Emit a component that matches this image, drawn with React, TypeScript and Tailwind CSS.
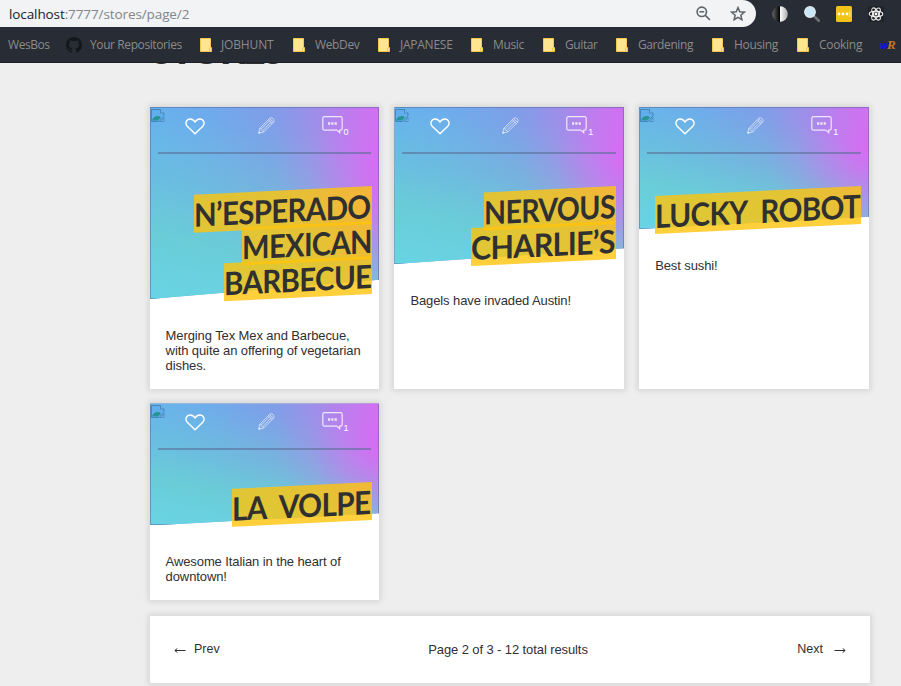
import React from "react";

type Line = { text: string; width: string; fit: string };
type Store = { lines: Line[]; reviews: number; description: string };

const stores: Store[] = [
  {
    lines: [
      { text: "N’ESPERADO", width: "w-[178px]", fit: "scale-x-[0.92]" },
      { text: "MEXICAN", width: "w-[130px]", fit: "scale-x-[0.91]" },
      { text: "BARBECUE", width: "w-[148px]", fit: "scale-x-[0.92]" },
    ],
    reviews: 0,
    description: "Merging Tex Mex and Barbecue, with quite an offering of vegetarian dishes.",
  },
  {
    lines: [
      { text: "NERVOUS", width: "w-[132px]", fit: "scale-x-[0.893]" },
      { text: "CHARLIE’S", width: "w-[145px]", fit: "scale-x-[0.95]" },
    ],
    reviews: 1,
    description: "Bagels have invaded Austin!",
  },
  {
    lines: [{ text: "LUCKY ROBOT", width: "w-[206px]", fit: "scale-x-[0.925] [word-spacing:8px]" }],
    reviews: 1,
    description: "Best sushi!",
  },
  {
    lines: [{ text: "LA VOLPE", width: "w-[140px]", fit: "scale-x-[0.93] [word-spacing:8px]" }],
    reviews: 1,
    description: "Awesome Italian in the heart of downtown!",
  },
];

const bookmarks = [
  { label: "JOBHUNT", width: "w-[93px]", gap: "gap-[9px] tracking-[-0.15px]" },
  { label: "WebDev", width: "w-[85px]", gap: "gap-[10px] tracking-[-0.35px]" },
  { label: "JAPANESE", width: "w-[93px]", gap: "gap-[10px] tracking-[-0.25px]" },
  { label: "Music", width: "w-[72px]", gap: "gap-[10px] tracking-[-0.35px]" },
  { label: "Guitar", width: "w-[73px]", gap: "gap-[10px] tracking-[-0.4px]" },
  { label: "Gardening", width: "w-[96px]", gap: "gap-[10px] tracking-[-0.4px]" },
  { label: "Housing", width: "w-[85px]", gap: "gap-[10px] tracking-[-0.3px]" },
  { label: "Cooking", width: "w-[83px]", gap: "gap-[10px] tracking-[-0.3px]" },
];

function Folder() {
  return (
    <svg className="h-[14px] w-[12px] shrink-0" viewBox="0 0 12 14">
      <path d="M.5.5h10v9h1v4H.5z" fill="#ffe58f" stroke="#f2c94c" />
      <path d="M9.5 13V10" stroke="#f2c94c" />
    </svg>
  );
}

function GitHub() {
  return (
    <svg className="h-4 w-4 shrink-0" viewBox="0 0 16 16" fill="#14171a">
      <path d="M8 0C3.58 0 0 3.58 0 8c0 3.54 2.29 6.53 5.47 7.59.4.07.55-.17.55-.38 0-.19-.01-.82-.01-1.49-2.01.37-2.53-.49-2.69-.94-.09-.23-.48-.94-.82-1.13-.28-.15-.68-.52-.01-.53.63-.01 1.08.58 1.23.82.72 1.21 1.87.87 2.33.66.07-.52.28-.87.51-1.07-1.78-.2-3.64-.89-3.64-3.95 0-.87.31-1.59.82-2.15-.08-.2-.36-1.02.08-2.12 0 0 .67-.21 2.2.82a7.6 7.6 0 014 0c1.53-1.04 2.2-.82 2.2-.82.44 1.1.16 1.92.08 2.12.51.56.82 1.27.82 2.15 0 3.07-1.87 3.75-3.65 3.95.29.25.54.73.54 1.48 0 1.07-.01 1.93-.01 2.2 0 .21.15.46.55.38A8.01 8.01 0 0016 8c0-4.42-3.58-8-8-8z" />
    </svg>
  );
}

function BrowserBar() {
  return (
    <header className="h-[63px] border-b border-[#1b1e24] bg-[#282c34]">
      <div className="flex h-[27px]">
        <div className="flex h-[27px] w-[756px] items-center rounded-br-[14px] rounded-tr-[14px] bg-[#f1f3f4] pl-[9px] pr-[10px]">
          <span className="flex-1 whitespace-nowrap text-[13.5px] leading-[18px] tracking-[-0.1px] text-[#80868b]">
            <span className="text-[#202124]">localhost</span>:7777/stores/page/2
          </span>
          <svg className="mr-[19px] h-[15px] w-[15px]" viewBox="0 0 15 15" fill="none" stroke="#5f6368" strokeWidth="1.6">
            <circle cx="5.8" cy="5.8" r="4.7" />
            <path d="M3.4 5.8h4.8M9.2 9.2l4.7 4.7" />
          </svg>
          <svg className="h-4 w-4" viewBox="0 0 16 16" fill="none" stroke="#5f6368" strokeWidth="1.5">
            <path d="M8 1.6l1.75 4.2 4.55.4-3.45 3 1.03 4.45L8 11.3l-3.88 2.35L5.15 9.2 1.7 6.2l4.55-.4z" />
          </svg>
        </div>
        <div className="flex items-center gap-4 pl-4">
          <svg className="h-4 w-4" viewBox="0 0 16 16">
            <defs>
              <linearGradient id="contrastLeft">
                <stop offset="0" stopColor="#666" />
                <stop offset="1" stopColor="#000" />
              </linearGradient>
              <linearGradient id="contrastRight">
                <stop offset="0" stopColor="#fff" />
                <stop offset="1" stopColor="#aaa" />
              </linearGradient>
            </defs>
            <path d="M8 .2a7.8 7.8 0 000 15.600z" fill="url(#contrastLeft)" />
            <path d="M8 .2a7.8 7.8 0 010 15.600z" fill="url(#contrastRight)" />
          </svg>
          <svg className="h-4 w-4" viewBox="0 0 16 16">
            <path d="M9.5 9.5l5.300 5.200" stroke="#6a7076" strokeWidth="2.600" strokeLinecap="round" />
            <circle cx="6" cy="6" r="5.300" fill="#c8e8f8" stroke="#e5edf2" strokeWidth="1.200" />
          </svg>
          <svg className="h-4 w-4" viewBox="0 0 16 16">
            <rect width="16" height="16" rx="1.5" fill="#f0c419" />
            <g fill="#fff">
              <circle cx="3" cy="8" r="1.4" />
              <circle cx="7" cy="8" r="1.4" />
              <circle cx="11" cy="8" r="1.4" />
              <path d="M13.5 5h.8v6h-.8z" fillOpacity=".7" />
            </g>
          </svg>
          <svg className="h-4 w-4" viewBox="0 0 16 16">
            <rect width="16" height="16" fill="#202329" />
            <g fill="none" stroke="#f5f5f5" strokeWidth="1.1">
              <ellipse cx="8" cy="8" rx="6.8" ry="2.7" />
              <ellipse cx="8" cy="8" rx="6.8" ry="2.7" transform="rotate(60 8 8)" />
              <ellipse cx="8" cy="8" rx="6.8" ry="2.7" transform="rotate(120 8 8)" />
            </g>
            <circle cx="8" cy="8" r="1.4" fill="#fff" />
          </svg>
        </div>
      </div>
      <nav className="flex h-[35px] items-center overflow-hidden whitespace-nowrap pl-2 text-[12px] text-[#8a8b8d]">
        <span className="w-[58px] shrink-0 tracking-[-0.45px]">WesBos</span>
        <span className="flex w-[134px] shrink-0 items-center gap-2 tracking-[-0.4px]">
          <GitHub />
          Your Repositories
        </span>
        {bookmarks.map((b) => (
          <span key={b.label} className={`flex shrink-0 items-center ${b.width} ${b.gap}`}>
            <Folder />
            {b.label}
          </span>
        ))}
        <span className="flex shrink-0 items-center font-bold italic leading-4">
          <span className="w-[7px] text-[11px] text-[#1010f0]">w</span>
          <span className="font-['Liberation_Serif',serif] text-[13px] text-[#c87820]">R</span>
        </span>
      </nav>
    </header>
  );
}

function BrokenImage() {
  return (
    <svg className="absolute left-0 top-px h-[13px] w-[14px]" viewBox="0 0 14 13">
      <path d="M.5.500h9l3.500 3.500v3L8 12.500H.5z" fill="#62aeec" stroke="#4587bd" />
      <path d="M9.500.500V4H13" fill="#84bcec" stroke="#4587bd" />
      <path d="M1 11.500c1-4 4-5 7-4.500l2 1.500-3 3z" fill="#289494" />
      <path d="M13 8.500v4H9.500z" fill="#7fb9e6" stroke="#4587bd" strokeWidth=".8" />
    </svg>
  );
}

function Actions({ reviews }: { reviews: number }) {
  return (
    <div className="flex h-[47px] border-b-2 border-[#5a6e96]/60">
      <div className="flex w-[71px] justify-center pt-[11px]">
        <svg className="ml-1 h-[17px] w-[20px]" viewBox="0 0 20 17" fill="none" stroke="white" strokeWidth="1.4">
          <path d="M10 15.800L2.200 8.300C-.4 5.300 1.500 1 5 1c2.300 0 3.800 1 5 3 1.200-2 2.700-3 5-3 3.500 0 5.400 4.300 2.800 7.300z" />
        </svg>
      </div>
      <div className="flex w-[71px] justify-center pt-[10px]">
        <svg className="ml-1 h-[17px] w-[17px]" viewBox="0 0 17 17" fill="none" stroke="white" strokeOpacity=".65" strokeWidth=".9">
          <path d="M.7 16.200l1.200-5L11.700 1.400q1.700-1.500 3.500.2t.3 3.600L5.700 15zM1.900 11.200l3.800 3.800M10.300 2.800l3.900 3.800M11.600 1.500l3.900 3.800M3 12.300l9-9M4.500 13.800l9-9M.7 16.200l1.500-.4-1-1z" />
        </svg>
      </div>
      <div className="flex w-[71px] justify-center pt-[9px]">
        <div className="flex items-start">
          <svg className="h-[18px] w-[21px]" viewBox="0 0 21 18" fill="none" stroke="white" strokeOpacity=".8" strokeWidth="1.2">
            <path d="M2.500.7h16q1.700 0 1.700 1.700v10q0 1.700-1.700 1.700h-.8v2.500l-2.900-2.500H2.500Q.8 14.100.8 12.400v-10Q.8.7 2.500.7z" />
            <path d="M6 7.500h2.200M9.300 7.500h2.200M12.600 7.500h2.200" strokeWidth="2.500" />
          </svg>
          <span className="ml-px mt-[11px] text-[9px] leading-[11px] text-white">{reviews}</span>
        </div>
      </div>
    </div>
  );
}

function StoreCard({ store }: { store: Store }) {
  return (
    <article className="bg-white pb-[15.6px] shadow-[0_0_6px_2px_rgba(0,0,0,0.1)]">
      <div className="relative isolate px-2 pb-[7px]">
        <div className="absolute inset-0 -z-10 border border-[#506496]/50 bg-[radial-gradient(ellipse_48%_85%_at_104%_34%,rgba(224,100,245,0.9)_0%,rgba(219,108,242,0.5)_38%,rgba(205,118,235,0.15)_72%,transparent_100%),linear-gradient(12deg,#68d4e4_0%,rgba(106,206,214,0.95)_28%,rgba(108,200,214,0.6)_52%,rgba(108,195,225,0.2)_80%,transparent_100%),linear-gradient(to_right,#64adf2_0%,#6fa6ef_25%,#8298e9_52%,#a08aea_75%,#c873f2_100%)] bg-origin-border [clip-path:polygon(0_0,100%_0,100%_90%,0_100%)]">
          <BrokenImage />
        </div>
        <Actions reviews={store.reviews} />
        <h2 className="mt-[33px] flex origin-right -skew-y-[2.8deg] flex-col items-end font-['Lato',sans-serif] text-[32px] font-bold tracking-[-0.7px] text-[#303030]">
          {store.lines.map((line) => (
            <span key={line.text} className="flex h-[35px] items-center">
              <span className={`h-[38px] whitespace-nowrap bg-[#ffc40b]/80 text-left leading-[39px] ${line.width}`}>
                <span className={`inline-block origin-left ${line.fit}`}>{line.text}</span>
              </span>
            </span>
          ))}
        </h2>
      </div>
      <p className="pl-4 pr-3 pt-[29px] text-[13px] leading-[15px] tracking-[-0.1px]">{store.description}</p>
    </article>
  );
}

function Arrow({ className = "" }: { className?: string }) {
  return (
    <svg className={`mt-[7px] h-[7px] w-[12px] ${className}`} viewBox="0 0 12 7" fill="none" stroke="#303030">
      <path d="M11.500 3.500H1M3.300 1.500L.8 3.500 3.300 5.500" />
    </svg>
  );
}

export default function App() {
  return (
    <div className="h-[686px] w-[901px] overflow-hidden bg-[#eee] font-['Open_Sans','Noto_Sans',sans-serif]">
      <BrowserBar />
      <main className="ml-[150px] w-[720px] font-['Liberation_Sans',Arial,sans-serif] text-[#303030]">
        <div className="flex h-11 items-start overflow-hidden">
          <h1 className="-mt-[38px] pl-px font-['Lato',sans-serif] text-[40px] font-black leading-[48px] tracking-[-3px]">STORES</h1>
        </div>
        <div className="-ml-[0.4px] grid w-[719.3px] grid-cols-3 gap-x-[15px] gap-y-[14.9px]">
          {stores.map((store) => (
            <StoreCard key={store.description} store={store} />
          ))}
        </div>
        <div className="mt-[15.9px] grid h-[67px] grid-cols-3 items-center bg-white px-6 text-[13px] shadow-[0_0_6px_2px_rgba(0,0,0,0.1)]">
          <span className="flex gap-2 text-[12.5px]">
            <Arrow />
            <span>Prev</span>
          </span>
          <span className="-ml-1 text-center tracking-[-0.1px]">Page 2 of 3 - 12 total results</span>
          <span className="flex justify-end gap-[11px] text-[12.5px]">
            <span>Next</span>
            <Arrow className="rotate-180" />
          </span>
        </div>
      </main>
    </div>
  );
}
